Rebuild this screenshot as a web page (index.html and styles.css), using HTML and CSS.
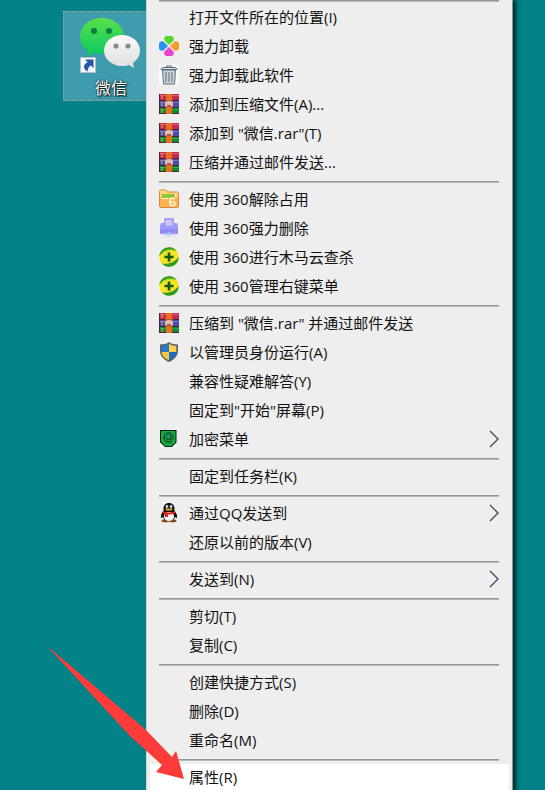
FILE: index.html
```
<!DOCTYPE html>
<html lang="zh-CN">
<head>
    <meta charset="UTF-8">
    <meta name="viewport" content="width=device-width, initial-scale=1.0">
    <title>微信 - 右键菜单</title>
    <link rel="stylesheet" href="styles.css">
</head>
<body>
    <!-- 公用图标 -->
    <svg class="icon-defs" aria-hidden="true">
        <defs>
            <linearGradient id="green-bubble" x1="0" y1="0" x2="0" y2="1">
                <stop offset="0" stop-color="#58e04c"/>
                <stop offset="1" stop-color="#08c862"/>
            </linearGradient>
            <linearGradient id="white-bubble" x1="0" y1="0" x2="0" y2="1">
                <stop offset="0" stop-color="#fafafa"/>
                <stop offset="1" stop-color="#dedede"/>
            </linearGradient>
            <linearGradient id="folder-fill" x1="0" y1="0" x2="0" y2="1">
                <stop offset="0" stop-color="#ffe08a"/>
                <stop offset="1" stop-color="#f7a83a"/>
            </linearGradient>
            <symbol id="rar" viewBox="0 0 20 20">
                <rect width="20" height="20" fill="#4a2436"/>
                <rect x="1" width="19" height="6" fill="#c42a50"/>
                <rect x="1" y="1" width="19" height="1" fill="#d95c78"/>
                <rect x="1" y="7" width="19" height="6" fill="#4c4aae"/>
                <rect x="1" y="8" width="19" height="1" fill="#7274cc"/>
                <rect x="1" y="14" width="19" height="5" fill="#128a32"/>
                <rect x="1" y="15" width="19" height="1" fill="#2fa548"/>
                <path d="M3 1v4M3 8v4M3 15v4" stroke="#d9b04c"/>
                <rect x="7" width="6" height="20" fill="#e8701c"/>
                <rect x="6" y="6" width="8" height="7" fill="#b4593a"/>
                <path d="M7 12.500V8M9 11V7M11 11V7M13 12.500V8" fill="none" stroke="#fff" stroke-width="1.200"/>
            </symbol>
            <symbol id="safe360" viewBox="0 0 20 20">
                <circle cx="10" cy="10" r="9.800" fill="#f7e422"/>
                <path d="M.3 9C1 3 6 0 11 .3c3 .2 5 1.600 6.500 3.600C12 2.500 5 3.500.3 9z" fill="#2c9b24"/>
                <path d="M19.700 10c.2 6-5 10-10 9.700-3-.2-5-1.400-6.700-3.300C9 17.500 15 16 19.700 10z" fill="#2c9b24"/>
                <path d="M2 8C5 3 11 1.800 16 4" fill="none" stroke="#b5dc28" stroke-width="1.200"/>
                <path d="M10 5.500v9M5.500 10h9" stroke="#0b5a16" stroke-width="2.600"/>
            </symbol>
            <symbol id="chevron" viewBox="0 0 10 18">
                <path d="M1 1l8 8-8 8" fill="none" stroke="#4d4961" stroke-width="1.400"/>
            </symbol>
        </defs>
    </svg>

    <main class="desktop">
        <!-- 桌面快捷方式 -->
        <div class="shortcut-column">
            <button class="shortcut" type="button">
                <svg class="shortcut-icon" viewBox="0 0 64 60" aria-hidden="true">
                    <path d="M23 2C10 2 1 10 1 21c0 6 3 11 8 14l-1 6 7-4c3 1 5 1 8 1 13 0 22-7 22-17S36 2 23 2z" fill="url(#green-bubble)"/>
                    <circle cx="15" cy="15" r="3" fill="#087f3b"/>
                    <circle cx="30" cy="15" r="3" fill="#087f3b"/>
                    <path d="M43 19c-10 0-18 7-18 15.500S33 50 43 50c3 0 5-.4 7-1l5 3-1-5c4-3 7-7 7-12.500C61 26 53 19 43 19z" fill="url(#white-bubble)"/>
                    <circle cx="37" cy="30" r="2.600" fill="#858b8c"/>
                    <circle cx="49" cy="30" r="2.600" fill="#858b8c"/>
                    <rect x="1.500" y="41.500" width="15" height="15" fill="#f5f8fc" stroke="#b4bfc4"/>
                    <path d="M6 43.500h8.500V52l-2.800-2.600c-2.200 1.600-3.200 3.400-3 6C3.500 53 4 48.600 8.500 46.200z" fill="#2957a5"/>
                </svg>
                <span class="shortcut-name">微信</span>
            </button>
        </div>

        <!-- 右键菜单 -->
        <ul class="menu">
            <li class="separator first"></li>
            <li><button class="item" type="button"><span class="icon"></span>打开文件所在的位置(I)</button></li>
            <li><button class="item" type="button">
                <svg class="icon" viewBox="0 0 20 20" aria-hidden="true">
                    <path d="M10 9L5.500 4.500C4.500 2 6 0 8 0h4c2 0 3.500 2 2.500 4.500z" fill="#55d92f"/>
                    <path d="M10 11l4.500 4.500c1 2.500-.5 4.500-2.500 4.500H8c-2 0-3.500-2-2.500-4.500z" fill="#ea43cf"/>
                    <path d="M9 10l-4.500 4.500C2 15.500 0 14 0 12V8c0-2 2-3.500 4.500-2.500z" fill="#2894f2"/>
                    <path d="M11 10l4.500-4.500C18 4.500 20 6 20 8v4c0 2-2 3.500-4.500 2.500z" fill="#f99b2c"/>
                </svg>强力卸载</button></li>
            <li><button class="item" type="button">
                <svg class="icon" viewBox="0 0 20 20" aria-hidden="true">
                    <rect width="20" height="20" fill="#fafafa"/>
                    <path d="M3.500 5h13l-1 14h-11z" fill="#ccd3da" stroke="#5d6c7b"/>
                    <path d="M7 7v10M10 7v10M13 7v10" stroke="#748392" stroke-width="1.300"/>
                    <path d="M2 4.500C2 3 3 2.500 5 2.500h10c2 0 3 .5 3 2z" fill="#dce3e9" stroke="#5d6c7b"/>
                    <path d="M7.500 2.500V1h5v1.500" fill="none" stroke="#5d6c7b"/>
                </svg>强力卸载此软件</button></li>
            <li><button class="item" type="button"><svg class="icon" aria-hidden="true"><use href="#rar"/></svg>添加到压缩文件(A)...</button></li>
            <li><button class="item" type="button"><svg class="icon" aria-hidden="true"><use href="#rar"/></svg>添加到 "微信.rar"(T)</button></li>
            <li><button class="item" type="button"><svg class="icon" aria-hidden="true"><use href="#rar"/></svg>压缩并通过邮件发送...</button></li>
            <li class="separator"></li>
            <li><button class="item" type="button">
                <svg class="icon" viewBox="0 0 20 20" aria-hidden="true">
                    <path d="M.5 2.500C.5 1.500 1 1 2 1h5l1.500 2H18c1 0 1.500.5 1.500 1.500V17c0 1-.5 1.500-1.500 1.500H2c-1 0-1.500-.5-1.500-1.500z" fill="url(#folder-fill)" stroke="#d68a3c"/>
                    <rect x="3" y="5" width="14" height="6" fill="#fff8dc"/>
                    <path d="M3 5h13v4H3z" fill="#8fc83a"/>
                    <path d="M1 10h8l2-2h8v9c0 1-.5 1-1 1H2c-.5 0-1 0-1-1z" fill="#f9b252"/>
                    <path d="M16 9.500h-3.500c-1 0-1.500.5-1.500 1.500v4c0 1 .5 1.500 1.500 1.500h2c1 0 1.500-.5 1.500-1.500v-.5c0-1-.5-1.500-1.500-1.500H11" fill="none" stroke="#fff6dc" stroke-width="1.500"/>
                </svg>使用 360解除占用</button></li>
            <li><button class="item" type="button">
                <svg class="icon" viewBox="0 0 20 20" aria-hidden="true">
                    <rect x="5" y="0" width="10" height="9" rx="1" fill="#aaa0fa"/>
                    <path d="M7 3h5M7 5.500h6" stroke="#dcd8ff"/>
                    <path d="M2 5h16l1 3v7H1V8z" fill="#a29af8"/>
                    <path d="M6 3h8v5H6z" fill="#b9b2ff"/>
                    <path d="M7 3.500h5M7 6h6" stroke="#e4e0ff"/>
                    <rect x="1" y="11" width="18" height="5" rx="1" fill="#938af4"/>
                    <path d="M4 15h12l-1.500 2h-9z" fill="#b9b3fa"/>
                    <circle cx="10" cy="15" r="1.300" fill="#73d8ff"/>
                    <path d="M5 17l-1 2.500M15 17l1 2.500M8 18.500h4" stroke="#cbc9f8"/>
                </svg>使用 360强力删除</button></li>
            <li><button class="item" type="button"><svg class="icon" aria-hidden="true"><use href="#safe360"/></svg>使用 360进行木马云查杀</button></li>
            <li><button class="item" type="button"><svg class="icon" aria-hidden="true"><use href="#safe360"/></svg>使用 360管理右键菜单</button></li>
            <li class="separator"></li>
            <li><button class="item" type="button"><svg class="icon" aria-hidden="true"><use href="#rar"/></svg>压缩到 "微信.rar" 并通过邮件发送</button></li>
            <li><button class="item" type="button">
                <svg class="icon" viewBox="0 0 20 20" aria-hidden="true">
                    <path d="M10 0C7.500 1.800 4.500 2.500 1 2.500V9c0 5 4 8.900 9 11 5-2.100 9-6 9-11V2.500c-3.500 0-6.500-.7-9-2.500z" fill="#59636b"/>
                    <path d="M10 1.800C7.500 3.400 5 4 2.700 4v6H10z" fill="#2a78c8"/>
                    <path d="M10 1.800C12.500 3.400 15 4 17.300 4v6H10z" fill="#ffd04b"/>
                    <path d="M2.700 10H10v8.300c-4-1.800-7-4.300-7.300-8.300z" fill="#ffc83a"/>
                    <path d="M17.300 10H10v8.300c4-1.800 7-4.300 7.300-8.300z" fill="#1f6bbd"/>
                </svg>以管理员身份运行(A)</button></li>
            <li><button class="item" type="button"><span class="icon"></span>兼容性疑难解答(Y)</button></li>
            <li><button class="item" type="button"><span class="icon"></span>固定到"开始"屏幕(P)</button></li>
            <li><button class="item" type="button">
                <svg class="icon" viewBox="0 0 20 20" aria-hidden="true">
                    <path d="M1 12v6h16v-6z" fill="#fff"/>
                    <path d="M1 1h16.500v12.500L13 18H6l-5-4.500z" fill="#06200d"/>
                    <path d="M2.500 2.500H16v10.500l-3.500 3.500h-6l-4-3.500z" fill="#18a040" stroke="#20c450" stroke-width=".8"/>
                    <circle cx="9.500" cy="8.500" r="2" fill="none" stroke="#04300f"/>
                    <path d="M11.500 6.500v3c0 1.500 2.500 1.200 2.500-1 0-3-2-4.500-4.500-4.500S5 6 5 8.500 7 13 9.500 13c1.500 0 2.500-.3 3.500-1" fill="none" stroke="#062e12"/>
                    <path d="M8 8.500c0-2 3-2 3 0" fill="none" stroke="#42bce0"/>
                </svg>加密菜单<svg class="chevron" aria-hidden="true"><use href="#chevron"/></svg></button></li>
            <li class="separator"></li>
            <li><button class="item" type="button"><span class="icon"></span>固定到任务栏(K)</button></li>
            <li class="separator"></li>
            <li><button class="item" type="button">
                <svg class="icon" viewBox="0 0 20 20" aria-hidden="true">
                    <ellipse cx="6.500" cy="17.800" rx="4" ry="1.500" fill="#8a4a1a"/>
                    <ellipse cx="13.500" cy="17.800" rx="4" ry="1.500" fill="#8a4a1a"/>
                    <path d="M10 0C6.500 0 4.500 2.500 4.500 6v2C2.500 10 1.500 12.500 2 15l2-1c1 3 3 4 6 4s5-1 6-4l2 1c.5-2.500-.5-5-2.500-7V6c0-3.500-2-6-5.500-6z" fill="#111"/>
                    <ellipse cx="10" cy="13.500" rx="5" ry="4.500" fill="#fff"/>
                    <ellipse cx="8" cy="3.800" rx="1.300" ry="1.800" fill="#fff"/>
                    <ellipse cx="12" cy="3.800" rx="1.300" ry="1.800" fill="#fff"/>
                    <circle cx="8.300" cy="4" r=".6"/>
                    <circle cx="11.700" cy="4" r=".6"/>
                    <ellipse cx="10" cy="6.600" rx="3.500" ry="1" fill="#f5ab22"/>
                    <path d="M4 8c3.500 2 8.500 2 12 0l.5 2c-2.500 1.300-5 1.600-7.500 1.500V14H6v-3l-2.500-1z" fill="#e52420"/>
                </svg>通过QQ发送到<svg class="chevron" aria-hidden="true"><use href="#chevron"/></svg></button></li>
            <li><button class="item" type="button"><span class="icon"></span>还原以前的版本(V)</button></li>
            <li class="separator"></li>
            <li><button class="item" type="button"><span class="icon"></span>发送到(N)<svg class="chevron" aria-hidden="true"><use href="#chevron"/></svg></button></li>
            <li class="separator"></li>
            <li><button class="item" type="button"><span class="icon"></span>剪切(T)</button></li>
            <li><button class="item" type="button"><span class="icon"></span>复制(C)</button></li>
            <li class="separator"></li>
            <li><button class="item" type="button"><span class="icon"></span>创建快捷方式(S)</button></li>
            <li><button class="item" type="button"><span class="icon"></span>删除(D)</button></li>
            <li><button class="item" type="button"><span class="icon"></span>重命名(M)</button></li>
            <li class="separator"></li>
            <li><button class="item active" type="button"><span class="icon"></span>属性(R)</button></li>
        </ul>

        <!-- 指向“属性”的红色箭头 -->
        <svg class="pointer" viewBox="0 0 138 136" aria-hidden="true">
            <path d="M0 0L99 84l27 28 4-6 8 28-28-7 6-7L84 91z" fill="#fc3b3a"/>
        </svg>
    </main>
</body>
</html>
```

FILE: styles.css
```
* {
    box-sizing: border-box;
}
body {
    margin: 0;
    background-color: #038387;
    font-family: "Open Sans", "Noto Sans CJK SC", sans-serif;
    font-size: 15px;
    color: #111;
}
button {
    border: none;
    font: inherit;
    color: inherit;
}
.icon-defs {
    position: absolute;
    width: 0;
    height: 0;
}
.desktop {
    position: relative;
    display: flex;
    height: 100vh;
    padding-right: 32px;
    overflow: hidden;
}

/* 桌面图标 */
.shortcut-column {
    flex: 0 0 146px;
    width: 146px;
    padding: 11px 0 0 63px;
}
.shortcut {
    display: flex;
    flex-direction: column;
    align-items: center;
    width: 96px;
    height: 90px;
    padding: 4px 0 0;
    background-color: #3f9caf;
    border: 1px dotted #b99a8c;
}
.shortcut-icon {
    width: 64px;
    height: 60px;
}
.shortcut-name {
    font-size: 16px;
    line-height: 24px;
    color: white;
    text-shadow: 1px 1px 2px #000, 0 0 2px #000;
}

/* 菜单 */
.menu {
    position: relative;
    flex: 1;
    align-self: flex-start;
    margin: 0;
    padding: 0 3px;
    list-style: none;
    background-color: #eee;
    border-left: 1px solid #c8d8d8;
    border-right: 1px solid #8a9697;
    box-shadow: 3px 0 4px rgba(0,0,0,0.7);
}
.item {
    display: flex;
    align-items: center;
    width: 100%;
    height: 29px;
    padding: 0 10px 3px 9px;
    background: none;
    line-height: 20px;
    text-align: left;
    white-space: pre;
}
.item:hover,
.item.active {
    background-color: white;
}
.icon {
    flex: none;
    width: 20px;
    height: 20px;
    margin-right: 10px;
}
.chevron {
    width: 10px;
    height: 18px;
    margin-left: auto;
}
.separator {
    height: 8px;
    margin: 0 10px 0 9px;
    padding-top: 3px;
}
.separator::before {
    content: "";
    display: block;
    height: 1px;
    background-color: #979797;
    border-bottom: 1px solid #b8b8b8;
}
.separator.first {
    height: 4px;
    padding-top: 0;
}

/* 红色箭头 */
.pointer {
    position: absolute;
    top: 645px;
    left: 46px;
    width: 138px;
    height: 136px;
}
```
